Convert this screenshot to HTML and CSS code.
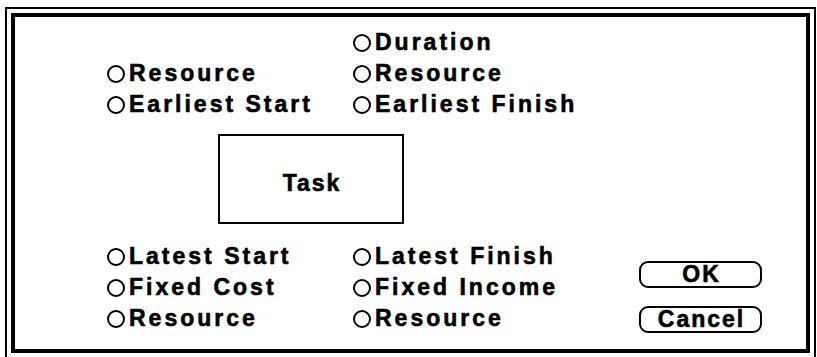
FILE: index.html
```html
<!DOCTYPE html>
<html>
<head>
<meta charset="utf-8">
<link rel="stylesheet" href="styles.css">
</head>
<body>
<div class="outer">
  <div class="inner">
    <div class="top">
      <div class="col">
        <div class="row"></div>
        <div class="row"><span class="radio"></span>Resource</div>
        <div class="row"><span class="radio"></span>Earliest Start</div>
      </div>
      <div class="col">
        <div class="row"><span class="radio"></span>Duration</div>
        <div class="row"><span class="radio"></span>Resource</div>
        <div class="row"><span class="radio"></span>Earliest Finish</div>
      </div>
    </div>
    <div class="task"><span class="task-label">Task</span></div>
    <div class="bottom">
      <div class="col">
        <div class="row"><span class="radio"></span>Latest Start</div>
        <div class="row"><span class="radio"></span>Fixed Cost</div>
        <div class="row"><span class="radio"></span>Resource</div>
      </div>
      <div class="col">
        <div class="row"><span class="radio"></span>Latest Finish</div>
        <div class="row"><span class="radio"></span>Fixed Income</div>
        <div class="row"><span class="radio"></span>Resource</div>
      </div>
      <div class="buttons">
        <div class="btn">OK</div>
        <div class="btn">Cancel</div>
      </div>
    </div>
  </div>
</div>
</body>
</html>
```
FILE: styles.css
```css
html, body {
  margin: 0;
  background: #fff;
}
body {
  font-family: "Liberation Sans", Arial, sans-serif;
  font-weight: bold;
  font-size: 23px;
  color: #000;
  overflow: hidden;
  -webkit-text-stroke: 0.6px #000;
}
.outer {
  margin: 7px 0 0 5px;
  width: 811px;
  height: 352px;
  box-sizing: border-box;
  border: 2px solid #000;
  padding: 4px;
}
.inner {
  height: 100%;
  box-sizing: border-box;
  border: 4px solid #000;
  padding: 10px 0 0 92px;
}
.top {
  display: grid;
  grid-template-columns: 246px auto;
}
.row {
  height: 31px;
  display: flex;
  align-items: center;
  gap: 4px;
  letter-spacing: 3px;
  white-space: nowrap;
}
.radio {
  width: 18px;
  height: 18px;
  border: 2.5px solid #000;
  border-radius: 50%;
  box-sizing: border-box;
  flex: none;
}
.task {
  margin: 14px 0 0 111px;
  width: 186px;
  height: 90px;
  box-sizing: border-box;
  border: 2px solid #000;
  display: flex;
  align-items: center;
  justify-content: center;
  padding-top: 8px;
}
.task-label {
  letter-spacing: 2px;
  padding-left: 2px;
}
.bottom {
  margin-top: 17px;
  display: grid;
  grid-template-columns: 246px 286px auto;
}
.buttons {
  display: flex;
  flex-direction: column;
  gap: 18px;
  padding-top: 20px;
}
.btn {
  width: 123px;
  height: 27px;
  box-sizing: border-box;
  border: 2px solid #000;
  border-radius: 9px;
  display: flex;
  align-items: center;
  justify-content: center;
  letter-spacing: 2px;
  padding-left: 2px;
}
```
